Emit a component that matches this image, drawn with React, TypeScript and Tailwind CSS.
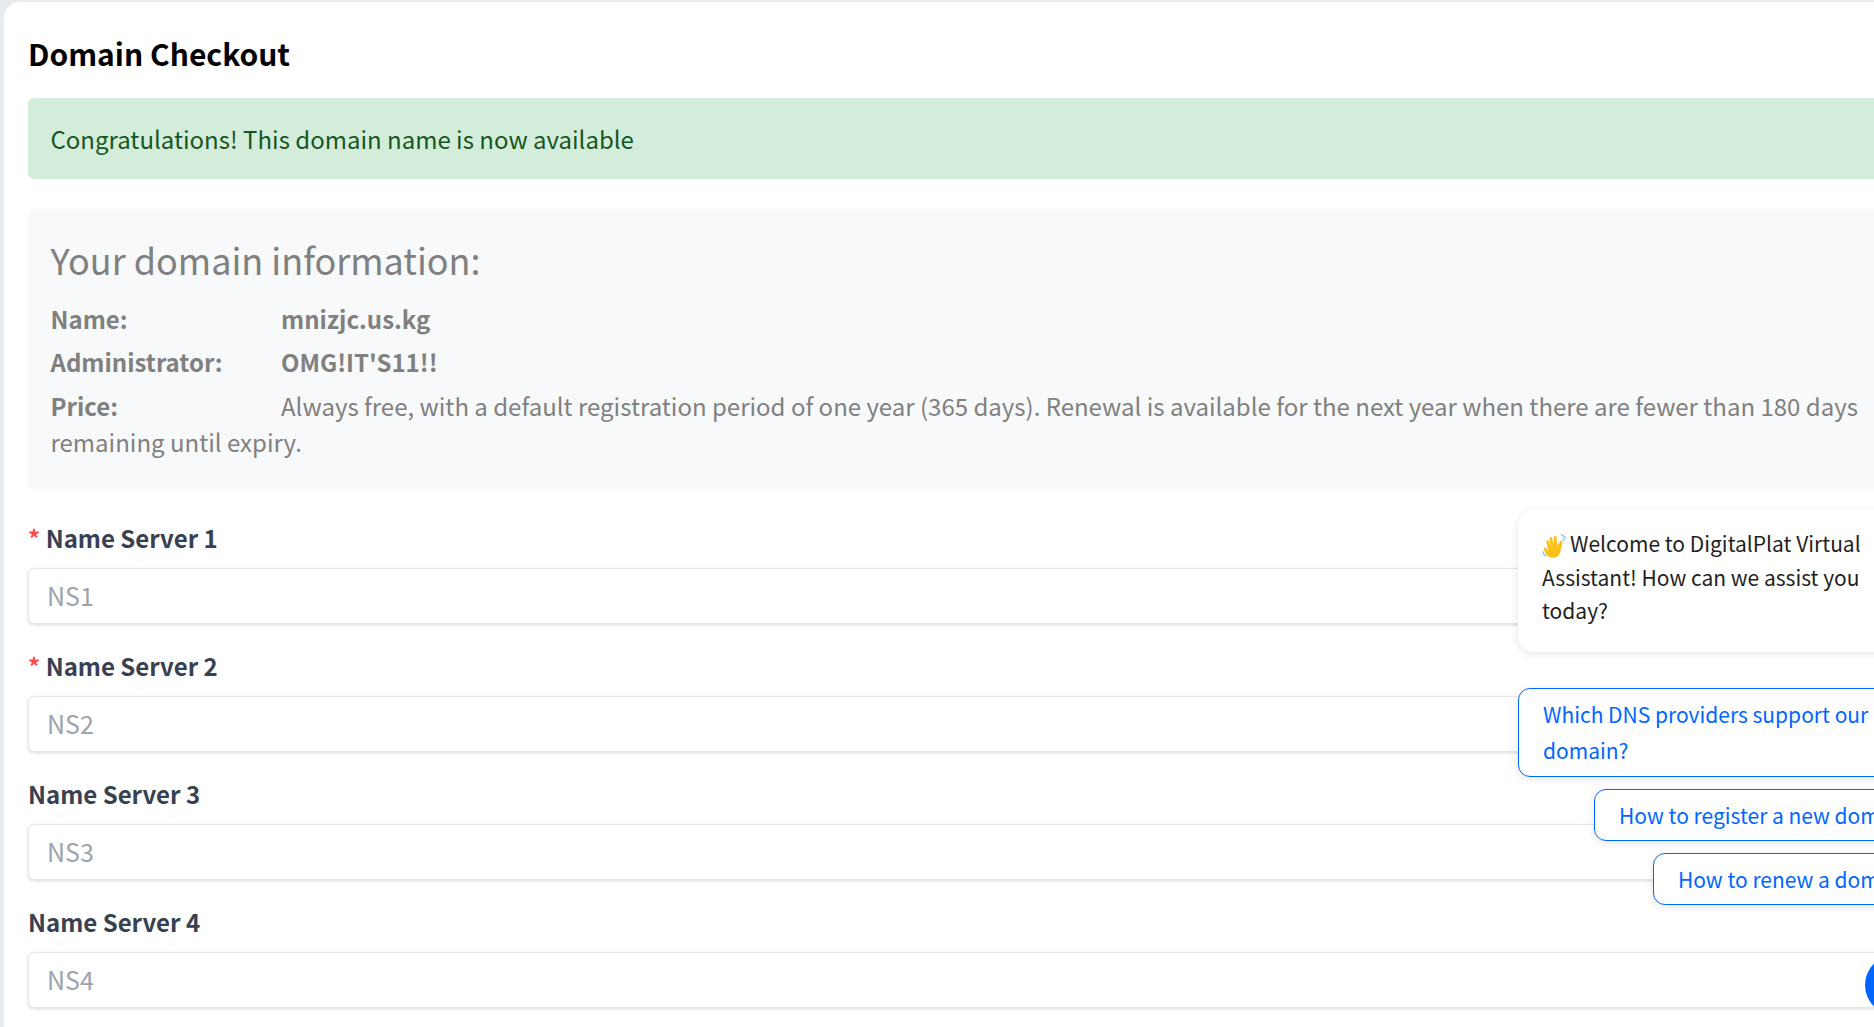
const font = { fontFamily: '"Noto Sans CJK SC", "Noto Sans", sans-serif' };

function Field({ n, required }: { n: number; required?: boolean }) {
  return (
    <div className="mb-[24px]">
      <div className="h-[36px] mb-[12px] flex items-center text-[24px] font-bold leading-[36px] text-[#374151]">
        {required && <span className="text-[#ff4d4f] mr-[5.5px]">*</span>}
        Name Server {n}
      </div>
      <div className="h-[56px] rounded-[6px] border border-[#e5e7eb] bg-white shadow-[0_1px_3px_rgba(0,0,0,0.16)] pl-[18px] flex items-center text-[25px] text-[#9ca3af]">
        NS{n}
      </div>
    </div>
  );
}

function Wave() {
  return (
    <svg viewBox="0 0 24 24" className="inline-block w-[25px] h-[25px] align-[-6px] mr-[3px]">
      <path d="M6 22.500C3.500 20.500 2.500 18 1.800 15.500c-.4-1.500 1.400-2.300 2.300-.9l1.700 2.700L4.200 8.500c-.3-1.600 1.900-2.200 2.400-.6l1.500 4.400L7.200 5.300c-.2-1.700 2.100-2.100 2.500-.4l1.500 6.600.2-7.300c0-1.700 2.400-1.800 2.600-.1l.6 8.400 2.600-4.300c.9-1.400 2.900-.5 2.400 1.100L17.900 17c-.7 3-1.700 4.700-3.700 5.900-2.700 1.300-5.900 1.100-8.200-.4z" fill="#fcc21b" />
      <path d="M18.500 1.500c1.800.6 3.400 2.100 4 4M20 5.500c.6.400 1 1 1.200 1.700M.8 18c.4 1.800 1.500 3.300 3 4.200" stroke="#7dc8ee" strokeWidth="1.200" fill="none" strokeLinecap="round" />
    </svg>
  );
}

const chip = "rounded-[12px] border border-[#0066ff] bg-white shadow-[0_2px_8px_rgba(0,0,0,0.1)] py-[7px] text-[21px] leading-[36px] text-[#0066ff]";

export default function App() {
  return (
    <div style={font} className="relative h-[1027px] w-[1874px] overflow-hidden bg-[#e9ecef]">
      <div className="ml-[4px] mt-[2px] w-[1960px] h-[1100px] rounded-tl-[16px] bg-white pl-[24px]">
        <h1 className="pt-[31px] h-[96px] text-[30px] font-bold leading-[40px] text-black">Domain Checkout</h1>
        <div className="h-[81px] rounded-[6px] bg-[#d4edda] pl-[22.5px] flex items-center text-[24px] text-[#155724]">
          Congratulations! This domain name is now available
        </div>
        <div className="mt-[30px] h-[280px] w-[1900px] rounded-[6px] bg-[#f8f9fa] pt-[20px] px-[22.5px] text-[24px] leading-[36px] text-[#808080]">
          <h2 className="text-[36px] leading-[60px] mb-[12px] font-normal">Your domain information:</h2>
          <div className="font-bold h-[43px] flex"><span className="w-[230.5px]">Name:</span><span>mnizjc.us.kg</span></div>
          <div className="font-bold h-[44px] flex"><span className="w-[230.5px]">Administrator:</span><span>OMG!IT'S11!!</span></div>
          <div className="w-[1840px]">
            <span className="inline-block w-[230.5px] font-bold">Price:</span>
            Always free, with a default registration period of one year (365 days). Renewal is available for the next year when there are fewer than 180 days remaining until expiry.
          </div>
        </div>
        <div className="mt-[31px] w-[1900px]">
          <Field n={1} required />
          <Field n={2} required />
          <Field n={3} />
          <Field n={4} />
        </div>
      </div>

      <div className="absolute left-[1518px] top-[510px] w-[427px] flex flex-col items-end">
        <div className="w-full h-[142px] rounded-[16px] bg-white shadow-[0_2px_8px_rgba(0,0,0,0.1)] pl-[24px] pr-[65px] pt-[17px] text-[21px] leading-[33.6px] text-[#1f1f1f]">
          <Wave />Welcome to DigitalPlat Virtual Assistant! How can we assist you today?
        </div>
        <div className={`w-full h-[89px] mt-[36px] pl-[24px] pr-[65px] ${chip}`}>Which DNS providers support our domain?</div>
        <div className={`mt-[12px] px-[24px] whitespace-nowrap ${chip}`}>How to register a new domain?</div>
        <div className={`mt-[12px] px-[24px] whitespace-nowrap ${chip}`}>How to renew a domain?</div>
      </div>
      <div className="absolute left-[1865px] top-[955px] w-[60px] h-[60px] rounded-full bg-[#0066ff]" />
    </div>
  );
}
